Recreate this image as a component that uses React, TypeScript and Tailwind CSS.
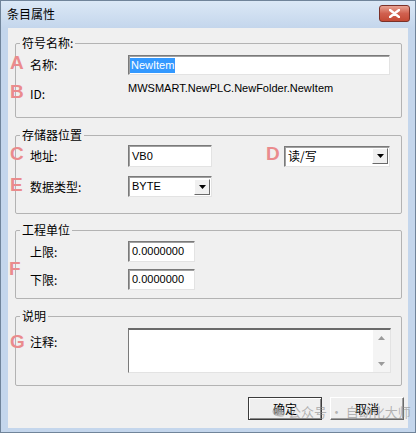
import React from 'react'

const cjk = "font-['Noto_Sans_CJK_SC','Noto_Sans',sans-serif]"
const latin = "font-['Liberation_Sans','Noto_Sans_CJK_SC',sans-serif]"

function Mark({ ch, className }: { ch: string; className: string }) {
  return (
    <span
      className={`absolute font-['Liberation_Sans',sans-serif] font-bold text-[19px] leading-[19px] text-[#ea8b8d] ${className}`}
    >
      {ch}
    </span>
  )
}

function Label({ text, className = '' }: { text: string; className?: string }) {
  return <span className={`w-[98px] shrink-0 text-[12px] leading-[16px] text-black ${cjk} ${className}`}>{text}</span>
}

const sunken =
  'border border-t-[#7a7a7a] border-l-[#7a7a7a] border-r-[#e3e3e3] border-b-[#e3e3e3] bg-white shadow-[inset_1px_1px_0_#a0a0a0]'

function TextBox({ value, w, h }: { value: string; w: string; h: string }) {
  return (
    <div className={`${sunken} ${w} ${h} flex items-center pl-[3px] text-[11px] ${latin}`}>{value}</div>
  )
}

function Combo({ value, w, h, cn = false }: { value: string; w: string; h: string; cn?: boolean }) {
  return (
    <div className={`${sunken} ${w} ${h} flex items-center justify-between pl-[3px] pr-[1px]`}>
      <span className={cn ? `text-[12px] ${cjk}` : `text-[11px] ${latin}`}>{value}</span>
      <span className="w-[16px] h-[16px] flex items-center justify-center bg-[#f0f0f0] border border-t-[#fff] border-l-[#fff] border-r-[#6a6a6a] border-b-[#6a6a6a]">
        <svg width="7" height="4" viewBox="0 0 7 4">
          <path d="M0 0h7L3.5 4z" fill="#000" />
        </svg>
      </span>
    </div>
  )
}

function Group({ title, className, children }: { title: string; className: string; children: React.ReactNode }) {
  return (
    <fieldset className={`mx-[6px] ml-[7px] border border-[#b3b3b3] rounded-[2px] ${className}`}>
      <legend className={`ml-[4px] px-[2px] text-[12px] leading-[16px] text-black ${cjk}`}>{title}</legend>
      {children}
    </fieldset>
  )
}

export default function App() {
  return (
    <div className="w-[416px] h-[433px] flex flex-col bg-[#c4d6ec] border border-[#70849a] relative overflow-hidden">
      <div className="h-[27px] flex justify-between bg-gradient-to-b from-[#dbe8f6] to-[#c4d6ec]">
        <span className={`pl-[6px] pt-[5px] text-[12px] leading-[16px] text-black ${cjk}`}>条目属性</span>
        <div className="mt-[4px] mr-[5px] w-[31px] h-[17px] rounded-[3px] border border-[#7b3128] bg-gradient-to-b from-[#e8a393] via-[#d0604f] to-[#c44a35] flex items-center justify-center">
          <svg width="11" height="9" viewBox="0 0 11 9">
            <path d="M1 1l9 7M10 1L1 8" stroke="#fff" strokeWidth="2.4" strokeLinecap="round" />
          </svg>
        </div>
      </div>

      <div className="mx-[7px] mb-[4px] flex-1 bg-[#f0f0f0] flex flex-col relative">
        <Group title="符号名称:" className="mt-[7px] h-[83px]">
          <div className="relative mt-[4px] h-[20px] flex items-center pl-[14px]">
            <Mark ch="A" className="left-[-6px] top-[-2px]" />
            <Label text="名称:" />
            <div className={`${sunken} w-[262px] h-[20px] flex items-center pl-[1px]`}>
              <span className={`bg-[#3399ff] text-white text-[11px] leading-[15px] px-[1px] ${latin}`}>NewItem</span>
            </div>
          </div>
          <div className="relative mt-[5px] flex items-start pl-[14px]">
            <Mark ch="B" className="left-[-6px] top-[2px]" />
            <Label text="ID:" className="mt-[6px]" />
            <span className={`text-[11px] leading-[16px] text-black ${latin}`}>MWSMART.NewPLC.NewFolder.NewItem</span>
          </div>
        </Group>

        <Group title="存储器位置" className="mt-[9px] h-[87px]">
          <div className="relative mt-[2px] h-[22px] flex items-center pl-[14px]">
            <Mark ch="C" className="left-[-6px] top-[-1px]" />
            <Label text="地址:" />
            <TextBox value="VB0" w="w-[84px]" h="h-[22px]" />
            <Mark ch="D" className="left-[250px] top-[-1px]" />
            <div className="ml-[72px]">
              <Combo value="读/写" w="w-[106px]" h="h-[21px]" cn />
            </div>
          </div>
          <div className="relative mt-[9px] h-[21px] flex items-center pl-[14px]">
            <Mark ch="E" className="left-[-6px] top-[-1px]" />
            <Label text="数据类型:" />
            <Combo value="BYTE" w="w-[84px]" h="h-[21px]" />
          </div>
        </Group>

        <Group title="工程单位" className="mt-[8px] h-[77px]">
          <div className="relative mt-[3px] h-[21px] flex items-center pl-[14px]">
            <Mark ch="F" className="left-[-7px] top-[18px]" />
            <Label text="上限:" />
            <TextBox value="0.0000000" w="w-[67px]" h="h-[21px]" />
          </div>
          <div className="mt-[7px] h-[21px] flex items-center pl-[14px]">
            <Label text="下限:" />
            <TextBox value="0.0000000" w="w-[67px]" h="h-[21px]" />
          </div>
        </Group>

        <Group title="说明" className="mt-[9px] h-[78px]">
          <div className="relative mt-[4px] flex items-start pl-[14px]">
            <Mark ch="G" className="left-[-6px] top-[4px]" />
            <Label text="注释:" className="mt-[6px]" />
            <div className="w-[263px] h-[45px] flex bg-white border border-t-2 border-t-[#6a6a6a] border-l-[#7a7a7a] border-r-[#e3e3e3] border-b-[#e3e3e3]">
              <div className="flex-1" />
              <div className="w-[17px] bg-[#f4f4f4] flex flex-col justify-between items-center py-[6px]">
                <svg width="7" height="4" viewBox="0 0 7 4">
                  <path d="M3.5 0L7 4H0z" fill="#9a9a9a" />
                </svg>
                <svg width="7" height="4" viewBox="0 0 7 4">
                  <path d="M0 0h7L3.5 4z" fill="#9a9a9a" />
                </svg>
              </div>
            </div>
          </div>
        </Group>

        <div className="mt-[11px] flex justify-end gap-[8px] pr-[4px]">
          <button className={`w-[74px] h-[23px] bg-[#efefef] border border-[#3c3c3c] shadow-[inset_1px_1px_0_#fff,inset_-1px_-1px_0_#8a8a8a] text-[12px] ${cjk}`}>
            确定
          </button>
          <button className={`w-[74px] h-[23px] bg-[#efefef] border border-t-[#fff] border-l-[#fff] border-r-[#6a6a6a] border-b-[#6a6a6a] shadow-[inset_-1px_-1px_0_#a0a0a0] text-[12px] ${cjk}`}>
            取消
          </button>
        </div>

        <div className={`absolute left-[264px] top-[376px] flex items-center gap-[3px] whitespace-nowrap text-[13px] leading-[15px] text-[#8a8a8a]/60 ${cjk}`}>
          <svg width="13" height="12" viewBox="0 0 14 13">
            <ellipse cx="6" cy="6" rx="5.5" ry="5" fill="#9a9a9a" fillOpacity="0.6" />
            <ellipse cx="9.5" cy="8.5" rx="4" ry="3.5" fill="#b0b0b0" fillOpacity="0.6" />
          </svg>
          <span>公众号 · 自动化大师</span>
        </div>
      </div>
    </div>
  )
}
